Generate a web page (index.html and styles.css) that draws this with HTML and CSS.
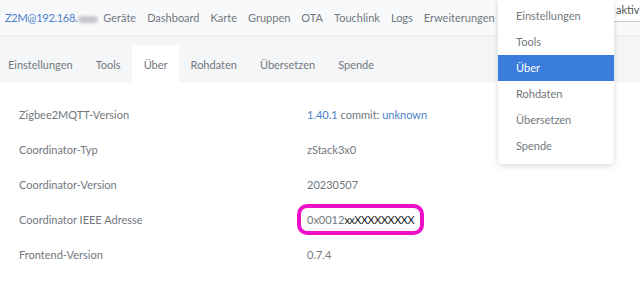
FILE: index.html
```html
<!doctype html>
<html>
  <head>
    <meta charset="utf-8">
    <link rel="stylesheet" href="styles.css">
    <title>Zigbee2MQTT - Einstellungen</title>
  </head>
  <body>
    <nav class="navbar">
      <a class="brand" href="#">Z2M@192.168.<span class="blur"></span></a>
      <a class="nav-link" href="#">Geräte</a>
      <a class="nav-link" href="#">Dashboard</a>
      <a class="nav-link" href="#">Karte</a>
      <a class="nav-link" href="#">Gruppen</a>
      <a class="nav-link" href="#">OTA</a>
      <a class="nav-link" href="#">Touchlink</a>
      <a class="nav-link" href="#">Logs</a>
      <a class="nav-link" href="#">Erweiterungen</a>
      <div class="nav-spacer"></div>
      <div class="permit">aktivi</div>
      <ul class="dropdown">
        <li>Einstellungen</li>
        <li>Tools</li>
        <li class="active">Über</li>
        <li>Rohdaten</li>
        <li>Übersetzen</li>
        <li>Spende</li>
      </ul>
    </nav>
    <div class="tabs">
      <a class="tab" href="#">Einstellungen</a>
      <a class="tab" href="#">Tools</a>
      <a class="tab active" href="#">Über</a>
      <a class="tab" href="#">Rohdaten</a>
      <a class="tab" href="#">Übersetzen</a>
      <a class="tab" href="#">Spende</a>
    </div>
    <div class="about">
      <div class="row"><span class="label">Zigbee2MQTT-Version</span><span class="value"><a href="#">1.40.1</a> commit: <a href="#">unknown</a></span></div>
      <div class="row"><span class="label">Coordinator-Typ</span><span class="value">zStack3x0</span></div>
      <div class="row"><span class="label">Coordinator-Version</span><span class="value">20230507</span></div>
      <div class="row"><span class="label">Coordinator IEEE Adresse</span><span class="value"><span class="marked">0x0012<span class="masked">xxXXXXXXXXX</span></span></span></div>
      <div class="row"><span class="label">Frontend-Version</span><span class="value">0.7.4</span></div>
    </div>
  </body>
</html>
```

FILE: styles.css
```css
body {
  margin: 0;
  font-family: Lato, "Noto Sans", sans-serif;
  font-size: 11px;
  color: #72787e;
  background: #fff;
  overflow: hidden;
}

a {
  text-decoration: none;
  color: inherit;
}

.navbar {
  position: relative;
  display: flex;
  align-items: center;
  height: 35px;
  padding-left: 5px;
  background: #f8f9fb;
  white-space: nowrap;
}

.brand {
  color: #4a7fc9;
  margin-right: 5px;
  letter-spacing: -0.3px;
}

.blur {
  display: inline-block;
  width: 20px;
  height: 7px;
  margin-left: 1px;
  border-radius: 4px;
  background: #c4c6c9;
  filter: blur(1.5px);
  vertical-align: middle;
}

.nav-link {
  margin-right: 11px;
}

.nav-spacer {
  flex: 1;
}

.permit {
  align-self: flex-start;
  width: 24px;
  height: 21px;
  line-height: 20px;
  padding-left: 2px;
  overflow: hidden;
  color: #555;
  border-left: 1px solid #c8ccd0;
  border-bottom: 1px solid #c8ccd0;
  background: #fff;
}

.dropdown {
  position: absolute;
  top: 0;
  left: 498px;
  width: 116px;
  margin: 0;
  padding: 3px 0 5px;
  list-style: none;
  background: #fff;
  border-radius: 0 0 4px 4px;
  box-shadow: 0 2px 6px rgba(0, 0, 0, 0.15);
  z-index: 2;
}

.dropdown li {
  height: 26px;
  line-height: 26px;
  padding-left: 18px;
}

.dropdown li.active {
  background: #3b7ddd;
  color: #fff;
}

.tabs {
  display: flex;
  align-items: flex-end;
  height: 45px;
  background: #f5f6f8;
  border-top: 2px solid #eceef1;
}

.tab {
  height: 36px;
  line-height: 37px;
  padding: 0 11.5px;
}

.tab:first-child {
  padding-left: 8px;
}

.tab.active {
  background: #fff;
}

.about {
  padding: 15px 19px;
}

.row {
  display: flex;
  align-items: center;
  height: 35px;
}

.label {
  width: 288px;
}

.value a {
  color: #4a7fc9;
}

.marked {
  display: inline-block;
  margin-left: -10px;
  padding: 5px 6px 5px 6px;
  border: 4px solid #ee10c8;
  border-radius: 10px;
}

.masked {
  color: #222;
  letter-spacing: -0.5px;
}
```
